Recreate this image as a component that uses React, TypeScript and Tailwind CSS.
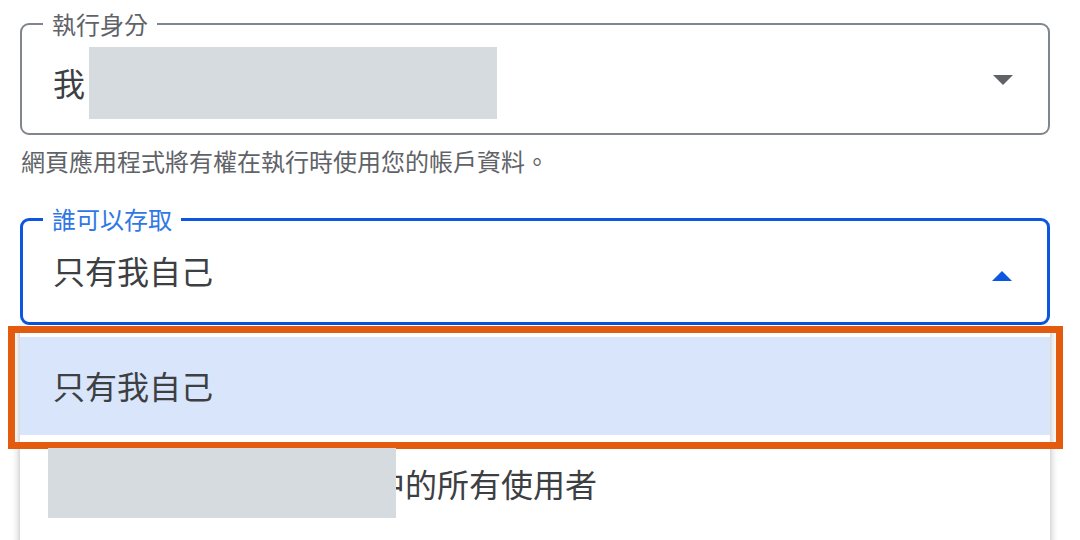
const font = { fontFamily: '"Noto Sans CJK TC", "Noto Sans", sans-serif' };

function ArrowDown({ color }: { color: string }) {
  return (
    <svg width="20" height="10" viewBox="0 0 20 10">
      <polygon points="0,0 20,0 10,10" fill={color} />
    </svg>
  );
}

function ArrowUp({ color }: { color: string }) {
  return (
    <svg width="20" height="10" viewBox="0 0 20 10">
      <polygon points="0,10 20,10 10,0" fill={color} />
    </svg>
  );
}

export default function App() {
  return (
    <div className="h-[540px] w-[1080px] overflow-hidden bg-white" style={font}>
      <div className="w-[1050px] pl-[20px]">
        {/* 執行身分 */}
        <fieldset className="mt-[12px] rounded-[9px] border-2 border-[#80868b]">
          <legend className="ml-[21px] px-[9px] text-[24px] leading-[24px] text-[#5f6368]">執行身分</legend>
          <div className="flex h-[97px] items-center pl-[31px] pr-[35px]">
            <span className="pb-[5px] text-[32px] leading-[40px] text-[#3c4043]">我</span>
            <div className="mb-[3px] ml-[4px] h-[72px] w-[408px] bg-[#d6dbdf]" />
            <div className="ml-auto pb-[9px]">
              <ArrowDown color="#5f6368" />
            </div>
          </div>
        </fieldset>

        <p className="mt-[14px] pl-[1px] text-[24px] leading-[24px] text-[#5f6368]">
          網頁應用程式將有權在執行時使用您的帳戶資料。
        </p>

        {/* 誰可以存取 */}
        <div className="relative mt-[34px]">
          <fieldset className="rounded-[9px] border-[3px] border-[#0b57e0]">
            <legend className="ml-[20px] px-[9px] text-[24px] leading-[24px] text-[#2f78e6]">誰可以存取</legend>
            <div className="flex h-[91px] items-center pl-[30px] pr-[35px]">
              <span className="pb-[14px] text-[32px] leading-[40px] text-[#3c4043]">只有我自己</span>
              <div className="ml-auto pb-[2px]">
                <ArrowUp color="#0b57e0" />
              </div>
            </div>
          </fieldset>

          {/* dropdown menu */}
          <div className="absolute left-0 right-0 top-full h-[300px] bg-white pt-[12px] shadow-[0_3px_8px_rgba(0,0,0,0.3)]">
            <div className="relative flex h-[98px] items-center bg-[#d9e5fb] pl-[33px]">
              <span className="pb-[2px] text-[32px] leading-[40px] text-[#3c4043]">只有我自己</span>
              <div className="pointer-events-none absolute -bottom-[14px] -left-[12px] -right-[13px] -top-[11px] border-[7px] border-[#e35b0f]" />
            </div>
            <div className="flex h-[96px] items-center pl-[28px]">
              <div className="relative z-10 h-[70px] w-[348px] bg-[#d6dbdf]" />
              <span className="-ml-[23px] text-[32px] leading-[40px] text-[#3c4043]">中的所有使用者</span>
            </div>
          </div>
        </div>
      </div>
    </div>
  );
}
